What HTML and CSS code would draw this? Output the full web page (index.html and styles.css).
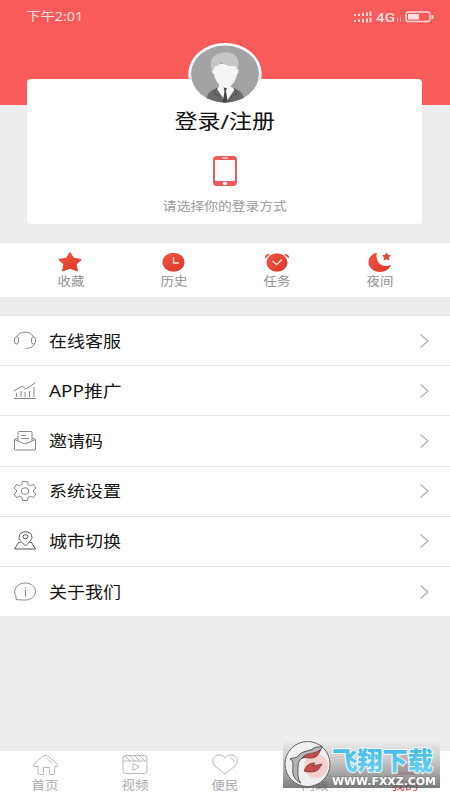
FILE: index.html
```html
<!DOCTYPE html>
<html lang="zh-CN">
<head>
<meta charset="utf-8">
<title>我的</title>
<link rel="stylesheet" href="styles.css">
</head>
<body>
<div class="screen">
  <header class="hero">
    <div class="status">
      <span class="time">下午2:01</span>
      <svg class="signal" width="50" height="14" viewBox="0 0 50 14">
        <g stroke="#ffd9d8" stroke-width="2"><path d="M2 4v2M6 3.700V6M10 3v3M14 2.200V6M17.500 1.500v4.500M2 10v2M6 9.500v2.500M10 9v3.500M14 8.500v4M17.500 7.500v5"/></g>
        <text class="net" x="23" y="11.500" textLength="19" lengthAdjust="spacingAndGlyphs">4G</text>
        <path d="M44.500 7.500v4M47.500 7.500v4" stroke="#ffc0be"/>
      </svg>
      <svg class="battery" width="29" height="12" viewBox="0 0 29 12"><rect x="1" y="1" width="24" height="9.500" rx="2.500" fill="none" stroke="#ffd9d8" stroke-width="1.500"/><rect x="3" y="3" width="11" height="5.500" fill="#ffe3e2"/><path d="M27.500 4v4" stroke="#ffd9d8" stroke-width="2"/></svg>
    </div>
  </header>
  <section class="card">
    <svg class="avatar" width="74" height="62" viewBox="0 0 74 62">
      <defs><clipPath id="face"><ellipse cx="37" cy="31" rx="34" ry="28.500"/></clipPath></defs>
      <ellipse cx="37" cy="31" rx="36.700" ry="31" fill="#fff"/>
      <g clip-path="url(#face)">
        <rect width="74" height="62" fill="#a3a3a3"/>
        <path d="M18 61c0-10 3-13 11-16h17c8 3 10 7 11 16z" fill="#6b6b6b"/>
        <path d="M31 38h12v6l4 2-9 13-9-13 2-2z" fill="#f7f7f7"/>
        <path d="M35.500 44h3.500l-1 4 2 13h-5.500l2-13z" fill="#444"/>
        <path d="M29 45l-3 6 4 1 6 10M46 45l3 6-4 1-6 10" fill="none" stroke="#505050"/>
        <path d="M26 21h23v5c2-1 2.500 4 0 5-1 8-7 14-11 14s-11-6-12-14c-3-1-3-6 0-5z" fill="#f4f4f4"/>
        <path d="M24.500 29c-2.500-6-2-14 2-16 5-5 18-5 21 0 4 3 3.500 11 1.500 15l-1-5c-6 1-12-1-15-4-1 4-6 4-7 5z" fill="#c6c6c6"/>
      </g>
    </svg>
    <h1 class="title"><span>登录/注册</span></h1>
    <svg class="phone" width="26" height="32" viewBox="0 0 26 32"><rect x="1" y="1" width="24" height="30" rx="4" fill="#ec5a5b"/><rect x="3" y="5" width="20" height="21" rx="1" fill="#fff"/><path d="M10 3h6" stroke="#fff"/><ellipse cx="13" cy="28.500" rx="2.200" ry="1.800" fill="#fff"/></svg>
    <p class="hint"><span>请选择你的登录方式</span></p>
  </section>
  <nav class="quick">
    <svg class="defs" width="0" height="0"><defs><linearGradient id="red" x1="0" y1="0" x2="1" y2="1"><stop offset="0" stop-color="#f25345"/><stop offset="1" stop-color="#d93a25"/></linearGradient></defs></svg>
    <a class="quick-item"><svg width="28" height="22" viewBox="0 0 28 22"><path d="M13 1.500l3.700 5.800 7.500 1.200-5 4.800 1.200 6.700-7.400-2.800L5.600 20l1.200-6.700-5-4.800 7.500-1.200z" fill="url(#red)" stroke="#e8442f" stroke-linejoin="round"/></svg><span>收藏</span></a>
    <a class="quick-item"><svg width="28" height="22" viewBox="0 0 28 22"><ellipse cx="13.500" cy="11.300" rx="11" ry="9.500" fill="url(#red)"/><path d="M13.500 6v6h5.500" fill="none" stroke="#ffe0d8" stroke-width="1.400"/></svg><span>历史</span></a>
    <a class="quick-item"><svg width="28" height="22" viewBox="0 0 28 22"><path d="M2 7.500C1.500 4 4 2.500 7 3.500zM26 7.500c.5-3.500-2-5-5-4z" fill="#dd5142"/><ellipse cx="14" cy="11.500" rx="10.500" ry="9.300" fill="url(#red)"/><path d="M9.500 10l4 3.500 5.500-5" fill="none" stroke="#ffe0d8" stroke-width="1.400"/></svg><span>任务</span></a>
    <a class="quick-item"><svg width="28" height="22" viewBox="0 0 28 22"><path d="M11 1.500C5 3 2.500 7 2.500 11c0 5.500 5 10 11.500 10 5.500 0 9.500-3 11-7-5 2-10 1-12.500-2.500C10.500 8.500 10 5 11 1.500z" fill="url(#red)"/><path d="M20.500 1.200l1.400 2.600 3.100.5-2.200 2.200.5 3-2.800-1.300-2.900 1.300.6-3L16 4.300l3.100-.5z" fill="#df4936"/></svg><span>夜间</span></a>
  </nav>
  <main class="menu">
    <a class="row"><svg class="icon" viewBox="0 0 24 22"><path d="M3.500 7C6 .5 18 .5 20.500 7M21.500 13c-.5 3-3 5-8.500 5.500"/><rect x="1.500" y="7" width="4" height="7" rx="2"/><rect x="18.500" y="7" width="4" height="7" rx="2"/></svg><span class="label">在线客服</span><svg class="chev" viewBox="0 0 10 16"><path d="M1 1.500L8.500 8 1 14.500"/></svg></a>
    <a class="row"><svg class="icon" viewBox="0 0 24 22"><path d="M1 18.500h22M1 11l8-5 4 3 9.500-6.500M3.500 17v-4M8 17v-6M12 17v-5M16.500 17v-6M21 17V7"/></svg><span class="label latin">APP推广</span><svg class="chev" viewBox="0 0 10 16"><path d="M1 1.500L8.500 8 1 14.500"/></svg></a>
    <a class="row"><svg class="icon" viewBox="0 0 24 22"><path d="M5 11V2.500Q5 1.500 6 1.500h12q1 0 1 1V11M5 8L1.500 9.500V19q0 1 1 1h19q1 0 1-1V9.500L19 8M1.500 9.500L12 14l10.500-4.500M8 5.500h5M8 8.500h8"/></svg><span class="label">邀请码</span><svg class="chev" viewBox="0 0 10 16"><path d="M1 1.500L8.500 8 1 14.500"/></svg></a>
    <a class="row"><svg class="icon" viewBox="0 0 24 22"><path d="M9.500 1.500h5l.5 3 2.500 1.200 3-1.200L23 8l-2.500 2v2l2.500 2-2.500 3.500-3-1.200L15 17.500l-.5 3h-5l-.5-3-2.500-1.200-3 1.200L1 14l2.500-2v-2L1 8l2.500-3.500 3 1.200L9 4.500z"/><ellipse cx="12" cy="11" rx="3.800" ry="3.300"/></svg><span class="label">系统设置</span><svg class="chev" viewBox="0 0 10 16"><path d="M1 1.500L8.500 8 1 14.500"/></svg></a>
    <a class="row"><svg class="icon dark" viewBox="0 0 24 22"><path d="M12.500 16C7.500 11 6 9 6 7c0-7 13-7 13 0 0 2-1.500 4-6.500 9zM7.500 12.500H5.500L1.500 19h21l-4-6.500h-2"/><ellipse cx="12.500" cy="6.700" rx="2.500" ry="2"/></svg><span class="label">城市切换</span><svg class="chev" viewBox="0 0 10 16"><path d="M1 1.500L8.500 8 1 14.500"/></svg></a>
    <a class="row"><svg class="icon" viewBox="0 0 24 22"><path d="M3 18.500v-3C-1 9 4 2 12.500 2 18 2 22.500 6 22.500 10.500S18 19 12.500 19c-3 0-5 0-9.500-.5zM12.500 9v6.500M12.500 6v1.200"/></svg><span class="label">关于我们</span><svg class="chev" viewBox="0 0 10 16"><path d="M1 1.500L8.500 8 1 14.500"/></svg></a>
  </main>
  <footer class="tabs">
    <a class="tab"><svg viewBox="0 0 28 24"><path d="M2.500 12.500L12 4q2.500-1.500 5 0l9.500 8.500q1 2-1 2H23.500V21q0 1.500-1.500 1.500h-3.500v-7h-6v7H8.500Q7 22.500 7 21v-6.500H4q-2.500 0-1.500-2zM16 6.500l5 4.500"/></svg><span>首页</span></a>
    <a class="tab"><svg viewBox="0 0 28 24"><rect x="2" y="3.500" width="24" height="18" rx="2.500"/><path d="M2 9h24M4 4l5 5M9 4l5 5M14 4l5 5M19 4l5 5M12 11.500v7l6-3.500z"/></svg><span>视频</span></a>
    <a class="tab"><svg viewBox="0 0 28 24"><path d="M14 22L4 14C-1 8 3 3 8 3c3 0 5 1.500 6 3 1-1.500 3-3 6-3 5 0 9 5 4 11zM19 6c2 0 4 1.500 4 4"/></svg><span>便民</span></a>
    <a class="tab"><svg viewBox="0 0 28 24"><ellipse cx="14" cy="12" rx="11" ry="9"/></svg><span>问政</span></a>
    <a class="tab active"><svg viewBox="0 0 28 24"><ellipse cx="14" cy="8" rx="6" ry="5"/><path d="M3 22c0-6 4-8 11-8s11 2 11 8z"/></svg><span>我的</span></a>
    <div class="mark">
      <svg width="157" height="48" viewBox="0 0 157 48">
        <defs>
          <linearGradient id="shade" x1="0" y1="0" x2="0" y2="1"><stop offset="0" stop-color="#eee" stop-opacity=".7"/><stop offset=".5" stop-color="#aaa" stop-opacity=".75"/><stop offset="1" stop-color="#555" stop-opacity=".78"/></linearGradient>
          <linearGradient id="blue" x1="0" y1="0" x2="0" y2="1"><stop offset="0" stop-color="#3cb4e2"/><stop offset="1" stop-color="#6fd3f2"/></linearGradient>
        </defs>
        <rect width="157" height="48" fill="url(#shade)"/>
        <circle cx="24.500" cy="24" r="22.500" fill="#f0f0f0" stroke="#666"/>
        <circle cx="33" cy="26" r="12" fill="#f3cfce"/>
        <path d="M7 19c3-2 6 0 8-3 5-6 11-4 16-8 3-2 5 0 8-2-1 6-5 9-10 9-8 1-14 4-14 11 0 7-1 13 3 17-7-3-9-9-8-15 0-6 0-8-3-9z" fill="#b5b5b5" stroke="#555"/>
        <path d="M19 18c5-6 11-3 18-8-1 5-4 8-9 8-4 0-6-1-9 0zM21 31c2-5 5-8 11-8l-2 3 9-2-2 3c-2 5-9 6-16 4z" fill="#c64b4d" stroke="#6b3435" stroke-width=".8"/>
        <text class="mark-name" x="49" y="29.500" textLength="101" lengthAdjust="spacingAndGlyphs">飞翔下载</text>
        <text class="mark-url" x="49" y="44.500" textLength="104" lengthAdjust="spacingAndGlyphs">WWW.FXXZ.COM</text>
      </svg>
    </div>
  </footer>
</div>
</body>
</html>
```
FILE: styles.css
```css
* { box-sizing: border-box; }
body { margin: 0; font-family: "Noto Sans", "Noto Sans CJK SC", sans-serif; }
.screen { width: 450px; height: 800px; background: #ededed; display: flex; flex-direction: column; overflow: hidden; }
.hero { height: 105px; flex: none; background: #f95a5a; }
.status { display: flex; padding: 10px 16px 0 26px; height: 26px; color: #ffe0df; }
.time { font: 12.5px/14px "Noto Sans", "Noto Sans CJK SC", sans-serif; transform: scaleX(1.150); transform-origin: left; margin-right: auto; }
.signal { margin-right: 2px; flex: none; }
.net { font: 500 13px Roboto, sans-serif; fill: #ffe0df; }
.battery { flex: none; margin-top: 1px; }
.card { width: 395px; height: 145px; margin: -26px 0 0 27px; background: #fff; border-radius: 4px; display: flex; flex-direction: column; align-items: center; flex: none; }
.avatar { margin-top: -36px; flex: none; }
.title { margin: 2px 0 0; font-size: 20px; line-height: 30px; font-weight: 400; color: #111; }
.title span { display: inline-block; transform: scaleX(1.150); }
.hint span { display: inline-block; transform: scaleX(1.130); }
.phone { margin-top: 18px; flex: none; }
.hint { margin: 11px 0 0; font-size: 12.2px; line-height: 18px; color: #999; }
.quick { height: 54px; margin-top: 19px; padding: 0 18px 0 19px; background: #fff; display: flex; flex: none; }
.defs { position: absolute; }
.quick-item { flex: 1; display: flex; flex-direction: column; align-items: center; padding-top: 8px; font-size: 12px; color: #929292; }
.quick-item span { line-height: 18px; transform: scaleX(1.120); }
.menu { margin-top: 18px; border-top: 1px solid #e5e5e5; background: #fff; flex: none; }
.row { height: 50.2px; border-bottom: 1px solid #e5e5e5; display: flex; align-items: center; padding: 0 20px 0 13px; }
.row:last-child { border-bottom-color: #ededed; }
.icon { width: 24px; height: 22px; margin-right: 12px; fill: none; stroke: #888; stroke-width: 1; stroke-linejoin: round; }
.icon.dark { stroke: #555; }
.label { font-size: 16px; line-height: 24px; color: #151515; transform: scaleX(1.125); transform-origin: left; margin-right: auto; }
.label.latin { transform: scaleX(1.180); }
.chev { width: 11px; height: 16px; fill: none; stroke: #b5b5b5; stroke-width: 1.3; }
.tabs { margin-top: auto; height: 49px; background: #fff; display: flex; flex: none; position: relative; }
.tab { flex: 1; display: flex; flex-direction: column; align-items: center; padding-top: 1px; font-size: 12px; color: #aaa; }
.tab svg { width: 28px; height: 24px; fill: none; stroke: #b9b9b9; stroke-width: 1; }
.tab span { line-height: 20px; transform: scaleX(1.120); }
.tab.active { color: #cf4042; }
.tab.active svg { stroke: #cf4042; fill: #e89b9b; }
.mark { position: absolute; left: 283px; top: -11px; width: 157px; height: 48px; }
.mark-name { font: 900 25px "Noto Sans CJK SC", sans-serif; fill: url(#blue); stroke: #f2fbff; stroke-width: 2px; paint-order: stroke; }
.mark-url { font: 700 10px "DejaVu Sans", sans-serif; fill: #fff; stroke: #777; stroke-width: 1px; paint-order: stroke; }
```
